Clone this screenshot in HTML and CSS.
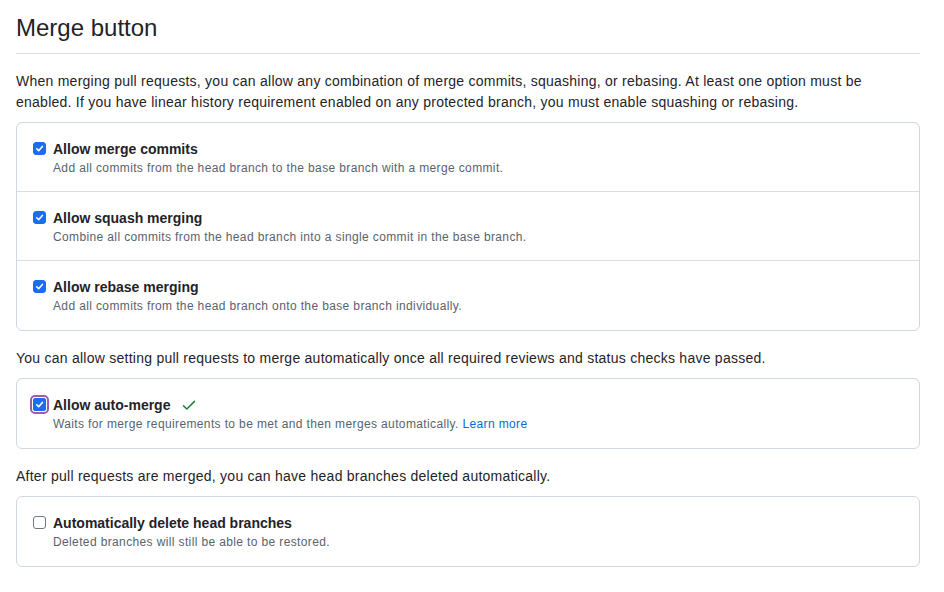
FILE: index.html
```html
<!DOCTYPE html>
<html lang="en">
<head>
<meta charset="utf-8">
<title>Merge button</title>
<link rel="stylesheet" href="styles.css">
</head>
<body>
<div class="page">
  <h2 class="subhead">Merge button</h2>
  <p class="note">When merging pull requests, you can allow any combination of merge commits, squashing, or rebasing. At least one option must be enabled. If you have linear history requirement enabled on any protected branch, you must enable squashing or rebasing.</p>
  <div class="box">
    <div class="row">
      <span class="cb checked"><svg viewBox="0 0 13 13" width="13" height="13"><path d="M3.2 6.8l2.3 2.3 4.4-5" fill="none" stroke="#fff" stroke-width="1.9" stroke-linecap="round" stroke-linejoin="round"/></svg></span>
      <div class="text">
        <div class="title">Allow merge commits</div>
        <div class="desc">Add all commits from the head branch to the base branch with a merge commit.</div>
      </div>
    </div>
    <div class="row">
      <span class="cb checked"><svg viewBox="0 0 13 13" width="13" height="13"><path d="M3.2 6.8l2.3 2.3 4.4-5" fill="none" stroke="#fff" stroke-width="1.9" stroke-linecap="round" stroke-linejoin="round"/></svg></span>
      <div class="text">
        <div class="title">Allow squash merging</div>
        <div class="desc">Combine all commits from the head branch into a single commit in the base branch.</div>
      </div>
    </div>
    <div class="row">
      <span class="cb checked"><svg viewBox="0 0 13 13" width="13" height="13"><path d="M3.2 6.8l2.3 2.3 4.4-5" fill="none" stroke="#fff" stroke-width="1.9" stroke-linecap="round" stroke-linejoin="round"/></svg></span>
      <div class="text">
        <div class="title">Allow rebase merging</div>
        <div class="desc">Add all commits from the head branch onto the base branch individually.</div>
      </div>
    </div>
  </div>

  <p class="note">You can allow setting pull requests to merge automatically once all required reviews and status checks have passed.</p>
  <div class="box">
    <div class="row">
      <span class="cb checked focused"><svg viewBox="0 0 13 13" width="13" height="13"><path d="M3.2 6.8l2.3 2.3 4.4-5" fill="none" stroke="#fff" stroke-width="1.9" stroke-linecap="round" stroke-linejoin="round"/></svg></span>
      <div class="text">
        <div class="title">Allow auto-merge <svg class="ok" viewBox="0 0 16 16" width="16" height="16"><path d="M2.5 8.7l3.3 3.3 7.7-7.6" fill="none" stroke="#1a7f37" stroke-width="1.5" stroke-linecap="round" stroke-linejoin="round"/></svg></div>
        <div class="desc">Waits for merge requirements to be met and then merges automatically. <a href="#" class="link">Learn more</a></div>
      </div>
    </div>
  </div>

  <p class="note">After pull requests are merged, you can have head branches deleted automatically.</p>
  <div class="box">
    <div class="row">
      <span class="cb"></span>
      <div class="text">
        <div class="title">Automatically delete head branches</div>
        <div class="desc">Deleted branches will still be able to be restored.</div>
      </div>
    </div>
  </div>
</div>
</body>
</html>
```

FILE: styles.css
```css
* { box-sizing: border-box; }
html, body { margin: 0; padding: 0; background: #fff; }
body {
  font-family: "Liberation Sans", Arial, sans-serif;
  font-size: 14px;
  line-height: 21px;
  color: #1f2328;
}
.page {
  padding: 10px 24px 0 16px;
}
.subhead {
  margin: 0 0 16px 0;
  font-size: 24px;
  font-weight: 400;
  line-height: 36px;
  padding-bottom: 7px;
  border-bottom: 1px solid #d8dee4;
}
.note {
  margin: 0 0 9px 0;
  padding: 1px 10px 0 0;
  letter-spacing: 0.25px;
}
.box {
  border: 1px solid #d1d9e0;
  border-radius: 6px;
  margin-bottom: 16px;
}
.row {
  display: flex;
  align-items: flex-start;
  gap: 7px;
  padding: 16px 16px 14px 16px;
}
.row:last-child {
  padding-bottom: 15px;
}
.row + .row {
  border-top: 1px solid #d8dee4;
}
.cb {
  flex: none;
  width: 13px;
  height: 13px;
  margin-top: 3px;
  border-radius: 3px;
  border: 1px solid #6e7781;
  background: #fff;
  display: flex;
  align-items: center;
  justify-content: center;
}
.cb svg { display: block; }
.cb.checked {
  background: #1a6cf0;
  border-color: #1a6cf0;
}
.cb.focused {
  outline: 2px solid #9d5ca9;
  outline-offset: 1px;
  border-radius: 2px;
}
.title {
  font-weight: 700;
  line-height: 20px;
  display: flex;
  align-items: center;
  gap: 11px;
}
.ok { display: block; }
.desc {
  font-size: 12px;
  line-height: 18px;
  color: #59636e;
  letter-spacing: 0.37px;
}
.link {
  color: #0969da;
  text-decoration: none;
}
```
